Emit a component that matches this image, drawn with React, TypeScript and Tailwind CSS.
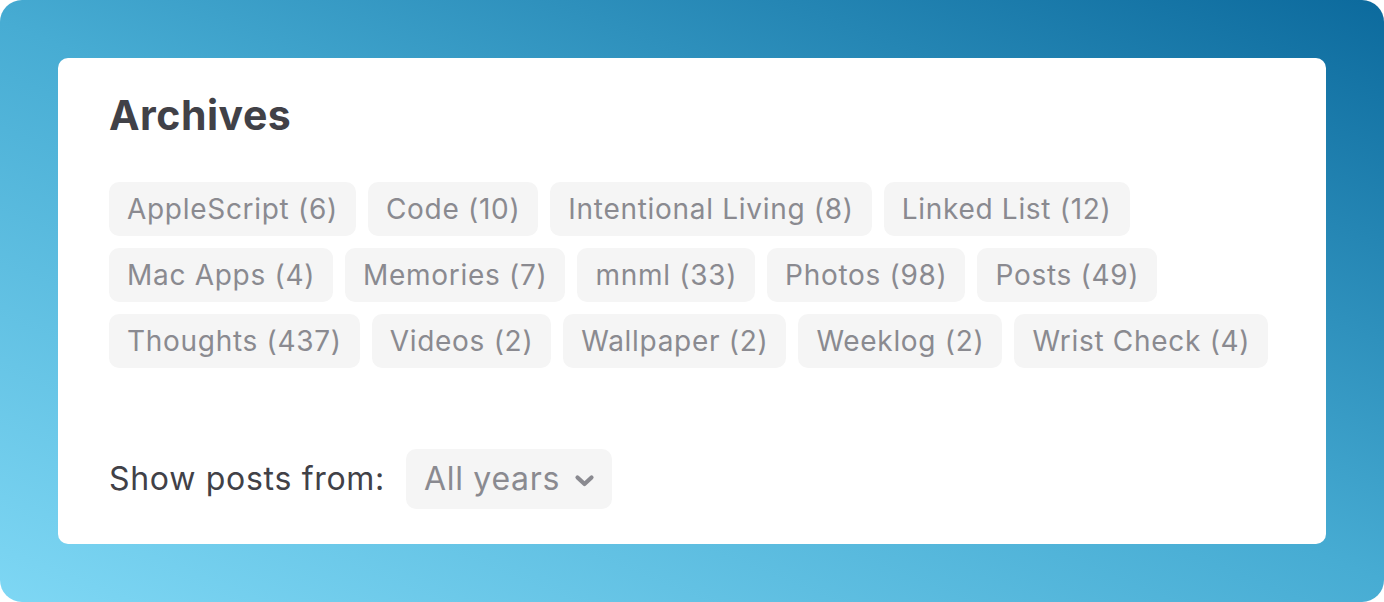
const rows: [string, number][][] = [
    [["AppleScript", 6], ["Code", 10], ["Intentional Living", 8], ["Linked List", 12]],
    [["Mac Apps", 4], ["Memories", 7], ["mnml", 33], ["Photos", 98], ["Posts", 49]],
    [["Thoughts", 437], ["Videos", 2], ["Wallpaper", 2], ["Weeklog", 2], ["Wrist Check", 4]],
];

export default function App() {
    return (
        <div className="w-[1384px] h-[602px] bg-white" style={{ fontFamily: "Inter, 'Noto Sans', sans-serif" }}>
            <div className="w-full h-full rounded-[22px] bg-[linear-gradient(22deg,#7ed7f4_0%,#47acd3_50%,#0c6a9d_100%)] p-[58px]">
                <div className="h-[486px] bg-white rounded-[10px] px-[51px] pt-[22px] flex flex-col">
                    {/* Heading */}
                    <h1 className="text-[41px] font-bold text-[#414147] leading-[70px] tracking-[0.5px]">Archives</h1>

                    {/* Category tags */}
                    <div className="mt-[32px] flex flex-col gap-[12px]">
                        {rows.map((row, i) => (
                            <div key={i} className="flex gap-[12px]">
                                {row.map(([name, count]) => (
                                    <span
                                        key={name}
                                        className="h-[54px] px-[18px] flex items-center rounded-[10px] bg-[#f5f5f5] text-[28px] tracking-[0.7px] text-[#8a8a90] whitespace-nowrap"
                                    >
                                        {name} ({count})
                                    </span>
                                ))}
                            </div>
                        ))}
                    </div>

                    {/* Year filter */}
                    <div className="mt-[81px] flex items-center gap-[21px]">
                        <span className="text-[32px] tracking-[0.7px] text-[#414147]">Show posts from:</span>
                        <button className="h-[60px] pl-[18px] pr-[17px] flex items-center gap-[14px] rounded-[10px] bg-[#f5f5f5] text-[32px] tracking-[0.7px] text-[#8a8a90]">
                            All years
                            <svg width="21" height="14" viewBox="0 0 21 14" fill="none" className="mt-[3px]">
                                <path d="M3.5 3.5 10.5 10 17.5 3.5" stroke="#8a8a90" strokeWidth="4.2" strokeLinecap="round" strokeLinejoin="round" />
                            </svg>
                        </button>
                    </div>
                </div>
            </div>
        </div>
    );
}
